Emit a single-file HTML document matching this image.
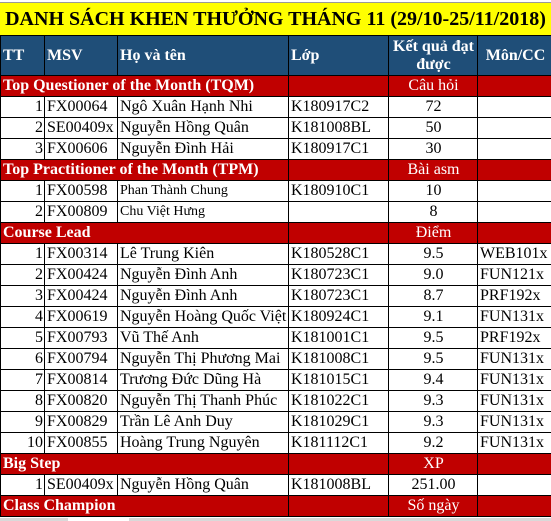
<!DOCTYPE html>
<html><head><meta charset="utf-8"><style>
body{margin:0;width:551px;height:521px;overflow:hidden;background:#fff;position:relative;font-family:"Liberation Serif",serif;}
.title{position:absolute;left:0;top:2px;width:551px;height:33px;background:#ffff00;border-top:1px solid #999;box-sizing:border-box;font-weight:bold;font-size:20px;line-height:32px;text-align:center;color:#000;white-space:nowrap;}
table{position:absolute;left:0;top:35px;border-collapse:collapse;table-layout:fixed;width:552px;font-size:16px;}
td{border:1px solid #000;padding:0 1px 0 2px;height:20px;line-height:20px;white-space:nowrap;overflow:visible;color:#000;}
tr.h td{background:#1f4e78;color:#fff;font-weight:bold;height:39px;line-height:18px;font-size:16px;white-space:normal;}
tr.r td{background:#c00000;color:#fff;}
tr.r td.l{font-weight:bold;overflow:visible;}
.n{text-align:right;}
.c{text-align:center;}
.bot{position:absolute;left:0;top:518px;width:551px;height:3px;background:#d9d9d9;}
.tab{position:absolute;left:68px;top:518px;width:61px;height:3px;background:#fff;}
</style></head><body>
<div class="title">DANH SÁCH KHEN THƯỞNG THÁNG 11 (29/10-25/11/2018)</div>
<table>
<colgroup><col style="width:44px"><col style="width:73px"><col style="width:171px"><col style="width:100px"><col style="width:89px"><col style="width:75px"></colgroup>
<tr class="h"><td>TT</td><td>MSV</td><td>Họ và tên</td><td>Lớp</td><td class="c">Kết quả đạt được</td><td class="c">Môn/CC</td></tr>
<tr class="r"><td class="l" colspan="3">Top Questioner of the Month (TQM)</td><td></td><td class="c">Câu hỏi</td><td></td></tr>
<tr><td class="n">1</td><td>FX00064</td><td>Ngô Xuân Hạnh Nhi</td><td>K180917C2</td><td class="c">72</td><td></td></tr>
<tr><td class="n">2</td><td>SE00409x</td><td>Nguyễn Hồng Quân</td><td>K181008BL</td><td class="c">50</td><td></td></tr>
<tr><td class="n">3</td><td>FX00606</td><td>Nguyễn Đình Hải</td><td>K180917C1</td><td class="c">30</td><td></td></tr>
<tr class="r"><td class="l" colspan="3">Top Practitioner of the Month (TPM)</td><td></td><td class="c">Bài asm</td><td></td></tr>
<tr><td class="n">1</td><td>FX00598</td><td style="font-size:14px">Phan Thành Chung</td><td>K180910C1</td><td class="c">10</td><td></td></tr>
<tr><td class="n">2</td><td>FX00809</td><td style="font-size:14px">Chu Việt Hưng</td><td></td><td class="c">8</td><td></td></tr>
<tr class="r"><td class="l" colspan="3">Course Lead</td><td></td><td class="c">Điểm</td><td></td></tr>
<tr><td class="n">1</td><td>FX00314</td><td>Lê Trung Kiên</td><td>K180528C1</td><td class="c">9.5</td><td>WEB101x</td></tr>
<tr><td class="n">2</td><td>FX00424</td><td>Nguyễn Đình Anh</td><td>K180723C1</td><td class="c">9.0</td><td>FUN121x</td></tr>
<tr><td class="n">3</td><td>FX00424</td><td>Nguyễn Đình Anh</td><td>K180723C1</td><td class="c">8.7</td><td>PRF192x</td></tr>
<tr><td class="n">4</td><td>FX00619</td><td>Nguyễn Hoàng Quốc Việt</td><td>K180924C1</td><td class="c">9.1</td><td>FUN131x</td></tr>
<tr><td class="n">5</td><td>FX00793</td><td>Vũ Thế Anh</td><td>K181001C1</td><td class="c">9.5</td><td>PRF192x</td></tr>
<tr><td class="n">6</td><td>FX00794</td><td>Nguyễn Thị Phương Mai</td><td>K181008C1</td><td class="c">9.5</td><td>FUN131x</td></tr>
<tr><td class="n">7</td><td>FX00814</td><td>Trương Đức Dũng Hà</td><td>K181015C1</td><td class="c">9.4</td><td>FUN131x</td></tr>
<tr><td class="n">8</td><td>FX00820</td><td>Nguyễn Thị Thanh Phúc</td><td>K181022C1</td><td class="c">9.3</td><td>FUN131x</td></tr>
<tr><td class="n">9</td><td>FX00829</td><td>Trần Lê Anh Duy</td><td>K181029C1</td><td class="c">9.3</td><td>FUN131x</td></tr>
<tr><td class="n">10</td><td>FX00855</td><td>Hoàng Trung Nguyên</td><td>K181112C1</td><td class="c">9.2</td><td>FUN131x</td></tr>
<tr class="r"><td class="l" colspan="3">Big Step</td><td></td><td class="c">XP</td><td></td></tr>
<tr><td class="n">1</td><td>SE00409x</td><td>Nguyễn Hồng Quân</td><td>K181008BL</td><td class="c">251.00</td><td></td></tr>
<tr class="r"><td class="l" colspan="3">Class Champion</td><td></td><td class="c">Số ngày</td><td></td></tr>
</table>
<div class="bot"></div><div class="tab"></div>
</body></html>
